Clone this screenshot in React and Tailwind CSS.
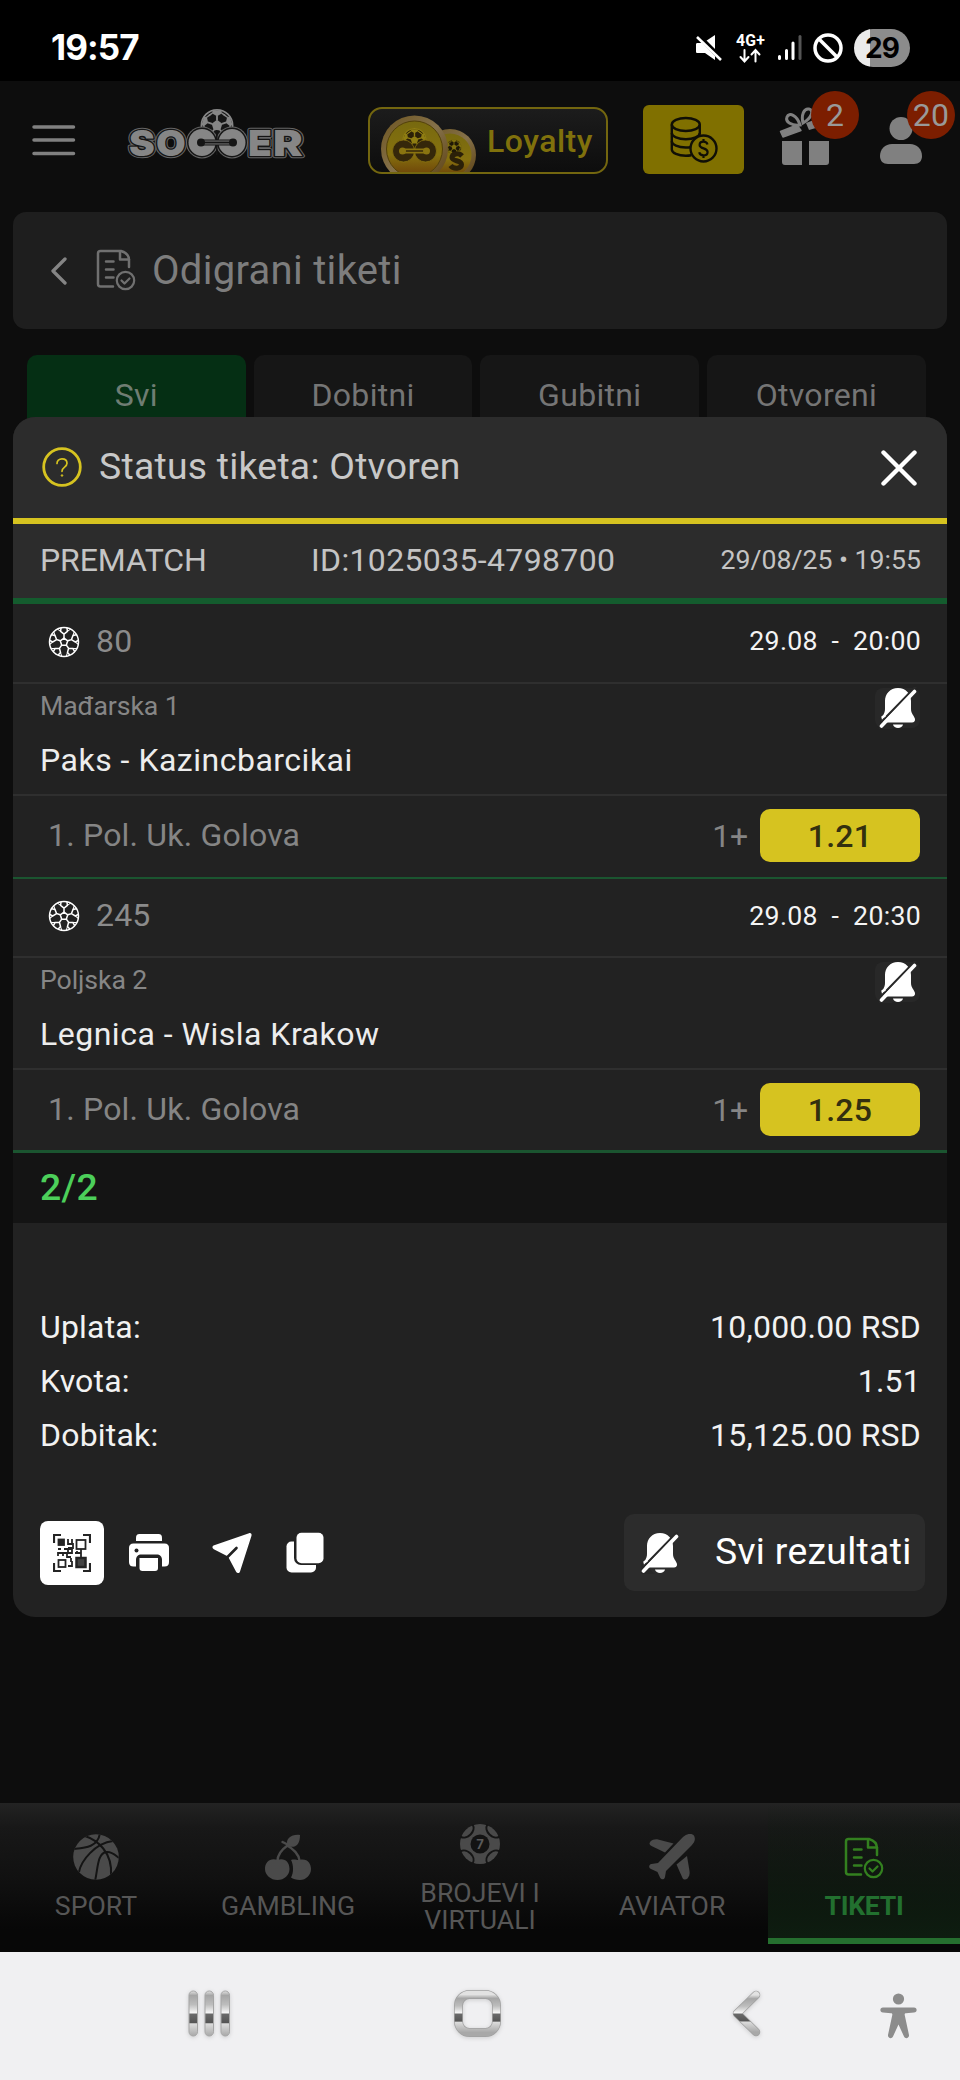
import React from "react";
import clsx from "clsx";

const matches = [
  {
    code: "80",
    time: "20:00",
    league: "Mađarska 1",
    teams: "Paks - Kazincbarcikai",
    bet: "1. Pol. Uk. Golova",
    pick: "1+",
    odd: "1.21",
  },
  {
    code: "245",
    time: "20:30",
    league: "Poljska 2",
    teams: "Legnica - Wisla Krakow",
    bet: "1. Pol. Uk. Golova",
    pick: "1+",
    odd: "1.25",
  },
];

const totals = [
  ["Uplata:", "10,000.00 RSD"],
  ["Kvota:", "1.51"],
  ["Dobitak:", "15,125.00 RSD"],
];

const tabs = ["Svi", "Dobitni", "Gubitni", "Otvoreni"];

/* ---------- status bar icons ---------- */

function MuteIcon() {
  return (
    <svg width="28" height="28" viewBox="0 0 28 28" fill="#fff">
      <path d="M2.500 9h5.500L20 1v25L10 19H2.500c-1 0-1.500-.5-1.500-1.500v-7C1 9.500 1.500 9 2.500 9z" />
      <path d="M2 0.500L28 26.500" stroke="#000" strokeWidth="5" />
      <path d="M2 3L26 26" stroke="#fff" strokeWidth="2.600" />
    </svg>
  );
}

function NetworkIcon() {
  return (
    <svg width="32" height="30" viewBox="0 0 32 30" className="overflow-visible">
      <text
        x="1"
        y="12.500"
        fill="#fff"
        fontFamily="Roboto, sans-serif"
        fontWeight="700"
        fontSize="16"
        textLength="29"
        lengthAdjust="spacingAndGlyphs"
      >
        4G+
      </text>
      <g stroke="#fff" strokeWidth="2" fill="none" strokeLinecap="round">
        <path d="M9.500 17v11M5.500 24l4 4.500 4-4.500" />
        <path d="M20.500 28.500v-11M16.500 21.500l4-4.500 4 4.500" />
      </g>
    </svg>
  );
}

function SignalIcon() {
  return (
    <svg width="26" height="28" viewBox="0 0 26 28" strokeWidth="3" strokeLinecap="round">
      <path d="M2.500 22.500v2M9.500 16.500v8M16 9v15.500" stroke="#fff" />
      <path d="M23 2.500v22" stroke="#555" />
    </svg>
  );
}

/* ---------- header icons ---------- */

const fifths = [0, 72, 144, 216, 288];

function BallMark({ cx, cy, r, light, dark }) {
  return (
    <g transform={`translate(${cx} ${cy}) scale(${r / 16})`}>
      <circle r="15.200" fill={dark} stroke={light} strokeWidth="1.600" />
      <path d="M0 -5.500L5.200 -1.700L3.200 4.500H-3.200L-5.200 -1.700Z" fill={light} />
      {fifths.map((a) => (
        <g key={a} transform={`rotate(${a})`}>
          <path d="M0 -5V-9.500" stroke={light} strokeWidth="1.800" />
          <path d="M0 -9L-5 -12L-4 -14.500H4L5 -12Z" fill={light} />
          <path d="M-4.500 -12L-8 -9.500M4.500 -12L8 -9.500" stroke={light} strokeWidth="1.400" />
        </g>
      ))}
    </g>
  );
}

function SoccerLogo() {
  const letter = {
    fontFamily: "Inter, sans-serif",
    fontWeight: 900,
    fontSize: 36,
    lengthAdjust: "spacingAndGlyphs",
    strokeLinejoin: "round",
  };
  const word = (props) => (
    <g {...props}>
      <text x="129" y="155.500" textLength="26" {...letter}>S</text>
      <text x="156" y="155.500" textLength="30" {...letter}>O</text>
      <text x="248" y="155.500" textLength="24" {...letter}>E</text>
      <text x="273" y="155.500" textLength="30" {...letter}>R</text>
    </g>
  );
  return (
    <svg width="184" height="58" viewBox="124 105 184 58" className="overflow-visible">
      <BallMark cx={217} cy={125.5} r={16.5} light="#868686" dark="#151515" />
      {word({ fill: "#666", stroke: "#666", strokeWidth: 4.5 })}
      {word({ fill: "#151515", stroke: "#151515", strokeWidth: 2.6 })}
      {word({ fill: "#868686" })}
      <g>
        <circle cx="202" cy="142.500" r="16" fill="#666" />
        <circle cx="232" cy="142.500" r="16" fill="#666" />
        <circle cx="202" cy="142.500" r="15" fill="#151515" />
        <circle cx="232" cy="142.500" r="15" fill="#151515" />
        <circle cx="202" cy="142.500" r="13.500" fill="#868686" />
        <circle cx="232" cy="142.500" r="13.500" fill="#868686" />
        <path d="M216.800 130v25" stroke="#151515" strokeWidth="1.500" />
        <path d="M202 142.500h30" stroke="#151515" strokeWidth="6" />
        <path d="M202 142.500h30" stroke="#868686" strokeWidth="3.800" />
        <path d="M202 142.500h30" stroke="#151515" strokeWidth="2" />
        <circle cx="201" cy="142.500" r="4" fill="#151515" />
        <circle cx="233" cy="142.500" r="4" fill="#151515" />
      </g>
    </svg>
  );
}

function LoyaltyCoins() {
  return (
    <svg width="98" height="58" viewBox="0 0 98 58" className="self-end">
      <defs>
        <linearGradient id="rim" x1="0" y1="0" x2="1" y2="1">
          <stop offset="0" stopColor="#6d5520" />
          <stop offset=".5" stopColor="#85714a" />
          <stop offset="1" stopColor="#5a3f10" />
        </linearGradient>
        <linearGradient id="gold" x1="0" y1="0" x2="0" y2="1">
          <stop offset="0" stopColor="#77690f" />
          <stop offset=".6" stopColor="#86710f" />
          <stop offset="1" stopColor="#6b3f08" />
        </linearGradient>
      </defs>
      <circle cx="69" cy="41" r="26" fill="url(#rim)" />
      <circle cx="69" cy="41" r="21.500" fill="url(#gold)" />
      <BallMark cx={73} cy={33} r={8} light="#80700f" dark="#1f1806" />
      <path d="M81 42c-3-3.500-10-2.500-10 1.500s9.500 2.500 9.500 7-8 5-11 1" fill="none" stroke="#2b2008" strokeWidth="5" />
      <circle cx="33.500" cy="35" r="33.500" fill="url(#rim)" />
      <circle cx="33.500" cy="35" r="28" fill="url(#gold)" stroke="#54420a" strokeWidth="1" />
      <BallMark cx={33.5} cy={26} r={12} light="#8f7d12" dark="#2b2008" />
      <circle cx="22.500" cy="37" r="11" fill="#35270a" stroke="#8a7410" strokeWidth=".8" />
      <circle cx="44.500" cy="37" r="11" fill="#35270a" stroke="#8a7410" strokeWidth=".8" />
      <path d="M22 37h23" stroke="#8a7410" strokeWidth="5" />
      <path d="M22 37h23" stroke="#35270a" strokeWidth="1.500" />
      <circle cx="21.500" cy="37" r="3.500" fill="#8a7410" />
      <circle cx="45.500" cy="37" r="3.500" fill="#8a7410" />
    </svg>
  );
}

function CoinStackIcon() {
  return (
    <svg width="48" height="48" viewBox="0 0 48 48" fill="none" stroke="#100f06" strokeWidth="2.400">
      <ellipse cx="15.800" cy="8.500" rx="14" ry="6.500" />
      <path d="M1.800 8.500v25c0 3.500 6.300 6.300 14 6.300 2 0 4-.2 5.500-.5" />
      <path d="M29.800 8.500v10" />
      <path d="M1.800 17c0 3.500 6.300 6.200 14 6.200s14-2.700 14-6.200M1.800 25.300c0 3.500 6.300 6.200 14 6.200 1.500 0 3 0 4.500-.3" />
      <circle cx="33.500" cy="32.500" r="13" fill="#807000" />
      <path
        d="M37.500 28.500c-.5-1.800-2-2.800-4-2.800-2.300 0-3.900 1.300-3.900 3.200 0 4.400 8 2.500 8 7 0 2-1.700 3.400-4.100 3.400-2.200 0-3.900-1.100-4.300-3M33.500 23v3M33.500 39v3"
        strokeWidth="2.200"
      />
    </svg>
  );
}

function GiftIcon() {
  return (
    <svg width="52" height="58" viewBox="0 0 52 58" fill="#808080">
      <path d="M3 34h20v24H6c-2 0-3-1-3-3zM30 34h20v21c0 2-1 3-3 3H30z" />
      <path d="M1.500 24.500L18 18l4 5.500L4 30z" strokeLinejoin="round" stroke="#808080" strokeWidth="1.500" />
      <path d="M27 16l16-6 4 8-17 5z" />
      <g fill="none" stroke="#808080" strokeWidth="3">
        <path d="M21 18C13 19 6 15 8 10c2-5 10-2 13 8z" />
        <path d="M24 16C22 8 25 1 30 2c5 1 3 9-6 14z" />
      </g>
    </svg>
  );
}

function TicketIcon({ className }) {
  return (
    <svg
      width="40"
      height="42"
      viewBox="0 0 40 42"
      fill="none"
      stroke="currentColor"
      strokeWidth="2.500"
      strokeLinecap="round"
      strokeLinejoin="round"
      className={className}
    >
      <path d="M17 37.500H4.500c-1.500 0-2.500-1-2.500-2.500V4.500C2 3 3 2 4.500 2H25c5 1.500 8 4 8 9v7" />
      <path d="M24 2.500v8h9" />
      <path d="M10 12.500h7.500M10 20.500h7.500M10 28.500h7.500" />
      <circle cx="29.500" cy="31.500" r="8.700" strokeWidth="2.200" />
      <path d="M25.500 31.500l3 3 5-5" strokeWidth="2.200" />
    </svg>
  );
}

/* ---------- ticket icons ---------- */

function SoccerBallIcon() {
  return (
    <svg width="32" height="32" viewBox="-16 -16 32 32" fill="none" stroke="#fff" strokeWidth="1.500">
      <circle r="14.500" />
      <path d="M0 -3.900L3.700 -1.200L2.300 3.200H-2.300L-3.700 -1.200Z" />
      {fifths.map((a) => (
        <g key={a} transform={`rotate(${a})`}>
          <path d="M0 -3.900V-7.800L-3.400 -10.600L-3 -14M0 -7.800L3.400 -10.600L3 -14" />
          <path d="M-3.400 -10.600L-6.500 -12.800M3.400 -10.600L6.500 -12.800" strokeWidth="1" />
        </g>
      ))}
    </svg>
  );
}

function BellOffIcon() {
  return (
    <svg width="38" height="42" viewBox="0 0 38 42">
      <path
        d="M19 1C11 1 6 7 6 14v8c0 5-3 7-3.500 10-.2 2 1 3.500 3 3.500h27.500c2 0 3.300-1.500 3-3.500C35.500 29 32 27 32 22v-8C32 7 27 1 19 1z"
        fill="#fff"
      />
      <path d="M14 37.500h10c-.5 2-2.500 3.500-5 3.500s-4.500-1.500-5-3.500z" fill="#fff" />
      <path d="M-1.500 39L36 0.500L34 -2" stroke="#282828" strokeWidth="2.400" fill="none" />
      <path d="M1 37.500L3 32L0 31V42H14L9 37.500z" fill="#282828" />
      <path d="M3.500 30L5.500 29" stroke="#fff" strokeWidth="2.500" strokeLinecap="round" />
      <path d="M2.500 39L35.500 4.500" stroke="#fff" strokeWidth="3.600" strokeLinecap="round" />
    </svg>
  );
}

function QrIcon() {
  return (
    <svg width="38" height="38" viewBox="0 0 38 38" fill="none" stroke="#242424" strokeWidth="1.800">
      <path d="M1 9V1h7M30 1h7v8M37 29v8h-7M8 37H1v-8" strokeWidth="2.200" />
      <rect x="5.500" y="5.500" width="5.500" height="5.500" fill="#242424" />
      <rect x="23.500" y="6" width="9" height="9" />
      <rect x="5.500" y="26" width="7" height="7" />
      <rect x="23.500" y="24" width="9" height="9" fill="#444" strokeWidth="2.500" />
      <path d="M15 5v5h4v-5M15 14h5V9M5 15h3M11 15h8v4H5v3M10 19v3M14 19v4h4M22 19h6v5M15 15v4M18 24v4M15 32h4v-5M24 19v-2M28 15v4" />
    </svg>
  );
}

function PrinterIcon() {
  return (
    <svg width="40" height="38" viewBox="0 0 40 38" fill="#fff">
      <path d="M7 7V4c0-2.500 1-4 3.500-4h19C32 0 33 1.500 33 4v3z" />
      <path d="M4.500 9.500h31c3 0 4.500 1.500 4.500 4.500v14c0 3-1.500 4.500-4.500 4.500h-31C1.500 32.500 0 31 0 28V14c0-3 1.500-4.500 4.500-4.500z" />
      <circle cx="7.500" cy="16.500" r="2" fill="#222" />
      <path d="M7 38V26c0-3.500 2-5.500 5.500-5.500h15c3.500 0 5.500 2 5.500 5.500v12z" fill="#222" />
      <path d="M10.500 24h18.500v10c0 2-.8 3-3 3H13.500c-2.200 0-3-1-3-3z" />
    </svg>
  );
}

function SendIcon() {
  return (
    <svg width="41" height="42" viewBox="0 0 41 42">
      <path
        d="M1.500 13.500L37 1.200c1.700-.6 3 .7 2.500 2.500L28 39.500c-.6 1.900-3 2-3.900.3L16 24.500 1.800 17.200c-1.800-1-1.700-3.100-.3-3.700z"
        fill="#fff"
      />
      <path d="M14 26.500L24.500 16" stroke="#222" strokeWidth="2.600" strokeLinecap="round" />
    </svg>
  );
}

function CopyIcon() {
  return (
    <svg width="38" height="42" viewBox="0 0 38 42">
      <rect x="0.500" y="9.500" width="29.500" height="31" rx="5" fill="#fff" />
      <rect x="8" y="-2" width="32" height="35" rx="7" fill="#222" />
      <rect x="10.500" y="0.700" width="27" height="30.500" rx="5" fill="#fff" />
    </svg>
  );
}

/* ---------- bottom navigation icons ---------- */

function BasketballIcon() {
  return (
    <svg width="46" height="46" viewBox="0 0 46 46">
      <defs>
        <clipPath id="basket">
          <circle cx="23" cy="23" r="22.800" />
        </clipPath>
      </defs>
      <circle cx="23" cy="23" r="22.800" fill="#4a4a4a" />
      <g clipPath="url(#basket)" fill="none" stroke="#141414" strokeWidth="2">
        <path d="M12 2C24 6 40 18 38 42" />
        <path d="M0 15c10-1 25-1 27-16" />
        <path d="M6 38C8 27 22 9 40 7" />
        <path d="M22 47c3-12 2-27 11-29 6-1 9 3 13 6" />
      </g>
    </svg>
  );
}

function CherryIcon() {
  return (
    <svg width="46" height="46" viewBox="0 0 46 46" fill="#4a4a4a">
      <g fill="none" stroke="#4a4a4a" strokeWidth="2.400" strokeLinecap="round">
        <path d="M12.500 27c0-6 5-12 10-15.500M22 11.500c6 3 12 9 12.500 15M17.500 8l6 3" />
      </g>
      <path d="M22.500 12C20 4 27 0 35 1c0 9-4 14-12.500 11z" />
      <path d="M26 26c3-1 5 0 8.500 0 8-2 11.500 4 11.500 9 0 6-5 11-11 11-4 0-7-1-9-2.500 3-5 2.500-13 0-17.500z" />
      <path d="M12.500 25.800C20 23.500 24.500 28 24.500 35c0 6-5 11-12 11S0 41 0 35c0-7 5-11.500 12.500-9.200z" />
    </svg>
  );
}

function ChipIcon() {
  return (
    <svg width="40" height="40" viewBox="-20 -20 40 40" className="overflow-visible">
      <circle r="20" fill="#4a4a4a" />
      {[45, 135, 225, 315].map((a) => (
        <g key={a} transform={`rotate(${a})`}>
          <path d="M-8.500 -19C-7 -11.500 7 -11.500 8.500 -19" fill="none" stroke="#151515" strokeWidth="2" />
        </g>
      ))}
      <circle r="9.500" fill="#131313" />
      <text y="4.800" textAnchor="middle" fill="#5a5a5a" fontFamily="Inter, sans-serif" fontWeight="700" fontSize="13">
        7
      </text>
    </svg>
  );
}

function PlaneIcon() {
  return (
    <svg width="46" height="46" viewBox="0 0 46 46" fill="#4a4a4a">
      <path d="M34 3c4-3.500 8-4 10.500-2 2.500 3 1.500 7-2 10.500L17 37l-1 6c-.5 3-4 3-5 .5L8.500 38 2 35c-2.500-1-2.500-4.500.5-5l6.500-1z" />
      <path d="M1.500 7.500C3 6 6 5 9 5.500l15.500 4-8.500 9L2.500 12C0 10.500 0 9 1.500 7.500z" />
      <path d="M38 22l2.500 15c.5 3-.5 6-2 7.500s-4 1.500-5-.5L27.500 30.500z" />
    </svg>
  );
}

function ChromeDefs() {
  return (
    <linearGradient id="chrome" x1="0" y1="0" x2="0" y2="1">
      <stop offset="0" stopColor="#e2e2e2" />
      <stop offset=".1" stopColor="#a5a5a5" />
      <stop offset=".3" stopColor="#bdbdbd" />
      <stop offset=".49" stopColor="#f8f8f8" />
      <stop offset=".51" stopColor="#6a6a6a" />
      <stop offset=".7" stopColor="#555" />
      <stop offset=".73" stopColor="#dcdcdc" />
      <stop offset="1" stopColor="#a8a8a8" />
    </linearGradient>
  );
}

function MatchRow({ match, last }) {
  return (
    <div>
      <div className="flex h-[79.5px] items-center justify-between border-b-2 border-[#2f2f2f] pl-[35px] pr-[26px]">
        <div className="-mt-0.5 flex items-center gap-4">
          <SoccerBallIcon />
          <p className="-mt-0.5 text-[32px] leading-none text-[#8b8b8b]">{match.code}</p>
        </div>
        <p className="-mt-0.5 whitespace-pre text-[26.67px] leading-none tracking-[0.3px] text-[#f4f4f4]">{`29.08  -  ${match.time}`}</p>
      </div>
      <div className="flex h-28 justify-between border-b-2 border-[#2f2f2f] pl-[27px] pr-[27px]">
        <div className="pt-[8px]">
          <p className="text-[26.67px] leading-[28px] tracking-[-0.1px] text-[#868686]">{match.league}</p>
          <p className="mt-[24px] text-[32px] leading-[32px] tracking-[0.5px] text-[#ededed]">{match.teams}</p>
        </div>
        <div className="mt-1 flex h-10 w-[45px] items-center justify-center rounded-lg bg-[#282828]">
          <BellOffIcon />
        </div>
      </div>
      <div
        className={clsx(
          "flex h-[83px] items-center justify-between border-[#1b5530] pl-[35px] pr-[27px]",
          last ? "border-b-[3px]" : "border-b-2"
        )}
      >
        <p className="-mt-0.5 text-[32px] leading-none text-[#858585]">{match.bet}</p>
        <div className="-mt-px flex items-center gap-3">
          <p className="text-[32px] leading-none tracking-[-0.2px] text-[#858585]">{match.pick}</p>
          <div className="flex h-[53px] w-40 items-center justify-center rounded-[10px] bg-[#d6c320] text-[32px] font-medium leading-none text-[#33300f]">
            {match.odd}
          </div>
        </div>
      </div>
    </div>
  );
}

function NavItem({ icon, label, className }) {
  return (
    <div className={clsx("flex w-48 flex-col items-center text-[26.67px] leading-[27px] tracking-normal text-[#565656]", className)}>
      {icon}
      <p className="text-center">{label}</p>
    </div>
  );
}

function App() {
  return (
    <div className="relative flex h-[2080px] w-[960px] flex-col overflow-hidden bg-[#0d0d0d] font-['Roboto',sans-serif] tracking-[0.2px]">
      {/* phone status bar */}
      <div className="flex h-[81px] shrink-0 items-center bg-black pl-[51px] pr-[50px] pt-3.5">
        <p className="font-['Inter',sans-serif] text-[35px] font-bold leading-none tracking-[-0.9px] text-white">19:57</p>
        <div className="ml-auto flex items-center">
          <MuteIcon />
          <div className="ml-3"><NetworkIcon /></div>
          <div className="ml-2.5"><SignalIcon /></div>
          <svg width="30" height="30" viewBox="0 0 30 30" fill="none" stroke="#fff" strokeWidth="3.500" className="ml-2.5">
            <circle cx="15" cy="15" r="13" />
            <path d="M6 6l18 18" />
          </svg>
          <div className="ml-[11px] flex h-[38px] w-14 items-center justify-center rounded-full bg-[linear-gradient(90deg,#ebebeb_28%,#8c8c8c_28%)] font-['Inter',sans-serif] text-[28px] font-bold leading-none tracking-[-1px] text-black">
            29
          </div>
        </div>
      </div>

      {/* app header */}
      <div className="flex h-[131px] shrink-0 items-start pl-8 pt-6">
        <svg width="44" height="32" viewBox="0 0 44 32" stroke="#808080" strokeWidth="3.500" strokeLinecap="round" className="mt-[19px]">
          <path d="M2 3h39.500M2 16h39.500M2 29.500h39.500" />
        </svg>
        <div className="ml-12"><SoccerLogo /></div>
        <div className="ml-[60px] mt-[2px] flex h-[67px] w-60 items-center overflow-hidden rounded-[14px] border-2 border-[#73660f] bg-linear-to-b from-[#1c1c1c] to-[#0d0d0d] pl-[11px]">
          <LoyaltyCoins />
          <p className="ml-2 text-[32px] font-medium leading-none tracking-[0.5px] text-[#80710c]">Loyalty</p>
        </div>
        <div className="ml-[35px] flex h-[69px] w-[101px] items-center justify-center rounded-md bg-[#807000]">
          <CoinStackIcon />
        </div>
        <div className="relative ml-[35px] mt-[2px]">
          <GiftIcon />
          <div className="absolute -top-[16px] left-[32px] flex size-12 items-center justify-center rounded-full bg-[#7c1e00] text-[32px] leading-none text-[#999]">
            2
          </div>
        </div>
        <div className="relative ml-[49px] mt-3">
          <svg width="42" height="48" viewBox="0 0 42 48" fill="#808080">
            <circle cx="21" cy="11.500" r="11.500" />
            <path d="M12 27h18c7 0 12 5 12 12 0 5-3 8-8 8H8c-5 0-8-3-8-8 0-7 5-12 12-12z" />
          </svg>
          <div className="absolute -top-[26px] left-[27px] flex size-12 items-center justify-center rounded-full bg-[#7c1e00] text-[32px] leading-none text-[#999]">
            20
          </div>
        </div>
      </div>

      {/* page title */}
      <div className="mx-[13px] flex h-[117px] shrink-0 items-center rounded-[13px] bg-[#1e1e1e] pl-[37px]">
        <svg width="18" height="28" viewBox="0 0 18 28" fill="none" stroke="#858585" strokeWidth="3.300" strokeLinecap="round" strokeLinejoin="round">
          <path d="M15 2L3 14l12 12" />
        </svg>
        <TicketIcon className="-mt-0.5 ml-[28px] text-[#707070]" />
        <p className="ml-[16px] text-[40px] leading-none tracking-[0.3px] text-[#7d7d7d]">Odigrani tiketi</p>
      </div>

      {/* filter tabs */}
      <div className="mt-[26px] flex shrink-0 gap-2 pl-[27px]">
        {tabs.map((tab, i) => (
          <div
            key={tab}
            className={clsx(
              "flex h-[80px] w-[218.7px] items-center justify-center rounded-[10px] text-[32px] leading-none tracking-[0.3px]",
              i === 0 ? "bg-[#052f14] text-[#6f7d73]" : "bg-[#161616] text-[#757575]"
            )}
          >
            {tab}
          </div>
        ))}
      </div>

      {/* ticket modal, lies over the list */}
      <div className="absolute left-[13px] top-[417px] flex h-[1200px] w-[934px] flex-col overflow-hidden rounded-[22px] bg-[#222]">
        <div className="flex h-[107px] shrink-0 items-center border-b-[6px] border-[#d6c320] bg-[#2c2c2c] pl-[29px] pr-[30px]">
          <svg width="40" height="40" viewBox="0 0 40 40" fill="none" stroke="#d6c320" className="-mt-0.5">
            <circle cx="20" cy="20" r="18.300" strokeWidth="2.800" />
            <path d="M15 16.500c0-2.800 2-4.700 5-4.700s5 1.900 5 4.500c0 4-5 3.700-5 8" strokeWidth="1.700" strokeLinecap="round" />
            <circle cx="20" cy="28.500" r=".8" fill="#d6c320" />
          </svg>
          <p className="-mt-0.5 ml-[17px] text-[37.33px] leading-none tracking-[0.25px] text-[#c8c8c8]">Status tiketa: Otvoren</p>
          <svg width="36" height="36" viewBox="0 0 36 36" stroke="#fff" strokeWidth="4.400" strokeLinecap="round" className="ml-auto">
            <path d="M2.500 2.500l31 31M33.500 2.500l-31 31" />
          </svg>
        </div>
        <div className="flex h-20 shrink-0 items-center border-b-[6px] border-[#145c2e] bg-[#2c2c2c] pb-0.5 pl-[27px] pr-[26px] text-[#c4c4c4]">
          <p className="w-[271px] text-[32px] leading-none tracking-[-0.1px]">PREMATCH</p>
          <p className="text-[32px] leading-none tracking-[0.35px]">ID:1025035-4798700</p>
          <p className="ml-auto text-[26.67px] leading-none tracking-normal">29/08/25 • 19:55</p>
        </div>
        {matches.map((match, i) => (
          <MatchRow key={match.code} match={match} last={i === matches.length - 1} />
        ))}
        <div className="flex h-[70px] shrink-0 items-center bg-[#141414] pl-[27px] text-[37.33px] font-medium leading-none tracking-[0.4px] text-[#4ccf5a]">
          2/2
        </div>
        <div className="mt-[77px] flex flex-col pl-[27px] pr-[26px] text-[32px] leading-[54px] text-[#f2f2f2]">
          {totals.map(([label, value]) => (
            <div key={label} className="flex justify-between">
              <p>{label}</p>
              <p>{value}</p>
            </div>
          ))}
        </div>
        <div className="mb-[26px] mt-auto flex items-center pl-[27px] pr-[22px]">
          <div className="flex size-16 items-center justify-center rounded-lg bg-white">
            <QrIcon />
          </div>
          <div className="ml-[25px] flex items-center">
            <PrinterIcon />
            <div className="ml-[43px]"><SendIcon /></div>
            <div className="ml-[33px]"><CopyIcon /></div>
          </div>
          <div className="ml-auto flex h-[77px] w-[301px] items-center rounded-[10px] bg-[#2c2c2c] pl-[17px]">
            <BellOffIcon />
            <p className="-mt-0.5 ml-[36px] text-[37.33px] leading-none tracking-[0.3px] text-white">Svi rezultati</p>
          </div>
        </div>
      </div>

      {/* bottom navigation */}
      <div className="mt-auto flex h-[149px] shrink-0 bg-[linear-gradient(180deg,#232323_0%,#181818_16%,#111_50%,#070707_85%)]">
        <NavItem className="gap-[13px] pt-[31px]" icon={<BasketballIcon />} label="SPORT" />
        <NavItem className="gap-[13px] pt-[31px]" icon={<CherryIcon />} label="GAMBLING" />
        <NavItem
          className="gap-[16px] pt-[21px]"
          icon={<ChipIcon />}
          label={
            <>
              BROJEVI I
              <br />
              VIRTUALI
            </>
          }
        />
        <NavItem className="gap-[13px] pt-[31px]" icon={<PlaneIcon />} label="AVIATOR" />
        <NavItem
          className="h-[141px] gap-[14px] border-b-[6px] border-[#256f2f] bg-linear-to-b from-transparent to-[#0e1d10] pt-[34px] font-bold tracking-[-0.3px]! text-[#22702f]!"
          icon={<TicketIcon className="text-[#33801f]" />}
          label="TIKETI"
        />
      </div>

      {/* android navigation */}
      <div className="flex h-32 shrink-0 items-center bg-[#f0f0f2] pb-1">
        <svg width="46" height="52" viewBox="0 0 46 52" className="ml-[187px] drop-shadow-sm">
          <defs><ChromeDefs /></defs>
          {[2, 18, 34].map((x) => (
            <rect key={x} x={x} y="3" width="8.500" height="45" rx="4.200" fill="url(#chrome)" stroke="#a5a5a5" strokeWidth="1" />
          ))}
        </svg>
        <svg width="52" height="52" viewBox="0 0 52 52" fill="none" className="ml-[219px] drop-shadow-sm">
          <rect x="6.500" y="6.500" width="38" height="38" rx="11" stroke="#a0a0a0" strokeWidth="9" />
          <rect x="6.500" y="6.500" width="38" height="38" rx="11" stroke="url(#chrome)" strokeWidth="7.500" />
        </svg>
        <svg width="34" height="52" viewBox="0 0 34 52" fill="none" strokeLinecap="round" strokeLinejoin="round" className="ml-[225px] drop-shadow-sm">
          <path d="M27 7L8 25.500 27 44" stroke="#a0a0a0" strokeWidth="8.500" />
          <path d="M27 7L8 25.500 27 44" stroke="url(#chrome)" strokeWidth="7" />
        </svg>
        <svg width="38" height="46" viewBox="0 0 38 46" fill="#8c8c8c" className="ml-[117px] mt-1">
          <circle cx="18.500" cy="6" r="5.600" />
          <path d="M3 14.500h31c3.500 0 3.500 5 0 5l-8 .8c-1 0-1.500.7-1.300 1.700L29 42c.6 3-3.600 4.500-5 1.500l-5.500-12-5.500 12c-1.400 3-5.600 1.500-5-1.500l4.300-20c.2-1-.3-1.700-1.300-1.700L3 19.500c-3.500 0-3.500-5 0-5z" />
        </svg>
      </div>
    </div>
  );
}

export default App;
